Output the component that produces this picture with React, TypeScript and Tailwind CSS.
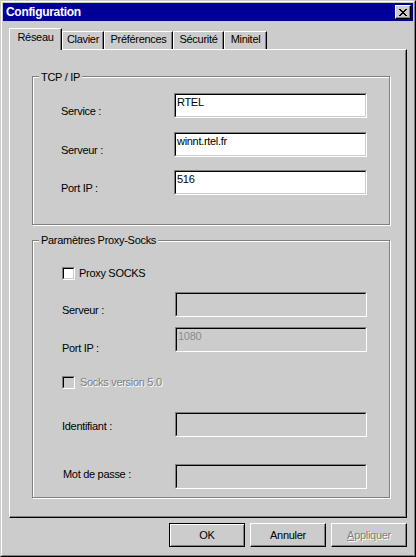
import React from 'react'

interface Tab {
  label: string
  width: string
  active?: boolean
}

const tabs: Tab[] = [
  { label: 'Réseau', width: 'w-[53px]', active: true },
  { label: 'Clavier', width: 'w-[42px]' },
  { label: 'Préférences', width: 'w-[69px]' },
  { label: 'Sécurité', width: 'w-[51px]' },
  { label: 'Minitel', width: 'w-[43px]' },
]

// sunken edit box, classic 3D look
function Field({
  value,
  disabled,
  width,
}: {
  value?: string
  disabled?: boolean
  width: string
}) {
  return (
    <div
      className={`h-[25px] ${width} border border-t-[#808080] border-l-[#808080] border-r-white border-b-white`}>
      <div
        className={`h-full border border-t-black border-l-black border-r-[#cccccc] border-b-[#cccccc] pl-[1px] pt-[1px] whitespace-nowrap ${
          disabled ? 'bg-[#cccccc] text-[#8c8c8c]' : 'bg-white text-black'
        }`}>
        {value}
      </div>
    </div>
  )
}

function CheckBox({ label, disabled }: { label: string; disabled?: boolean }) {
  return (
    <div
      className={`flex items-center h-[13px] ${
        disabled ? 'gap-[5px]' : 'gap-[4px]'
      }`}>
      <div className="w-[13px] h-[13px] border border-t-[#808080] border-l-[#808080] border-r-white border-b-white">
        <div
          className={`h-full border border-t-black border-l-black border-r-[#cccccc] border-b-[#cccccc] ${
            disabled ? 'bg-[#cccccc]' : 'bg-white'
          }`}
        />
      </div>
      <span
        className={
          disabled ? 'text-[#808080] [text-shadow:1px_1px_0_#ffffff]' : ''
        }>
        {label}
      </span>
    </div>
  )
}

function Row({
  label,
  labelTop,
  children,
}: {
  label: string
  labelTop: string
  children: React.ReactNode
}) {
  return (
    <div className="flex items-start">
      <span className={`w-[113px] whitespace-nowrap ${labelTop}`}>{label}</span>
      {children}
    </div>
  )
}

function Group({
  title,
  titleTop,
  className,
  children,
}: {
  title: string
  titleTop: string
  className: string
  children: React.ReactNode
}) {
  return (
    <div
      className={`relative ml-[22px] w-[358px] border border-[#808080] shadow-[inset_1px_1px_0_#ffffff,1px_1px_0_#ffffff] flex flex-col ${className}`}>
      <span
        className={`absolute left-[6px] ${titleTop} bg-[#cccccc] px-[2px] whitespace-nowrap`}>
        {title}
      </span>
      {children}
    </div>
  )
}

function Button({
  children,
  isDefault,
  disabled,
}: {
  children: React.ReactNode
  isDefault?: boolean
  disabled?: boolean
}) {
  return (
    <div
      className={`w-[76px] h-[24px] flex items-center justify-center ${
        isDefault
          ? 'border border-black shadow-[inset_1px_1px_0_#ffffff,inset_-1px_-1px_0_#808080]'
          : 'border border-t-white border-l-white border-r-black border-b-black shadow-[inset_-1px_-1px_0_#808080]'
      } ${disabled ? 'text-[#808080] [text-shadow:1px_1px_0_#ffffff]' : ''}`}>
      {children}
    </div>
  )
}

function CloseGlyph() {
  const rows = [
    'XX....XX',
    '.XX..XX.',
    '..XXXX..',
    '...XX...',
    '..XXXX..',
    '.XX..XX.',
    'XX....XX',
  ]
  return (
    <svg width="8" height="7" viewBox="0 0 8 7" shapeRendering="crispEdges">
      {rows.map((r, y) =>
        r.split('').map((c, x) =>
          c === 'X' ? (
            <rect key={`${x}-${y}`} x={x} y={y} width="1" height="1" fill="#000" />
          ) : null,
        ),
      )}
    </svg>
  )
}

export default function App() {
  return (
    <div className="w-[416px] h-[557px] bg-[#cccccc] text-black font-['Liberation_Sans',Arial,sans-serif] text-[11px] leading-[13px] tracking-[-0.3px] border border-t-[#cccccc] border-l-[#cccccc] border-r-black border-b-black">
      <div className="h-full border border-t-white border-l-white border-r-[#808080] border-b-[#808080] p-[1px] flex flex-col">
        {/* title bar */}
        <div className="h-[18px] bg-[#000099] flex items-center justify-between pl-[3px] pr-[2px]">
          <span className="text-white font-bold text-[12px] tracking-[-0.3px]">Configuration</span>
          <div className="w-[16px] h-[14px] bg-[#cccccc] border border-t-white border-l-white border-r-black border-b-black shadow-[inset_-1px_-1px_0_#808080] flex items-center justify-center pr-[1px]">
            <CloseGlyph />
          </div>
        </div>

        <div className="px-[6px] pt-[7px] flex flex-col">
          {/* tabs */}
          <div className="flex items-end h-[21px] relative z-10">
            {tabs.map((t) => (
              <div
                key={t.label}
                className={`${t.width} text-center whitespace-nowrap border-t border-l border-white border-r border-r-black shadow-[inset_-1px_0_0_#808080] ${
                  t.active
                    ? 'h-[22px] -mb-[1px] bg-[#cccccc] pt-[2px]'
                    : 'h-[18px] pt-[1px]'
                }`}>
                {t.label}
              </div>
            ))}
          </div>

          {/* tab panel */}
          <div className="h-[469px] border border-t-white border-l-white border-r-black border-b-black shadow-[inset_-1px_-1px_0_#808080] flex flex-col">
            <Group title="TCP / IP" titleTop="top-[-6px]" className="mt-[26px] h-[149px] pt-[16px] pl-[28px]">
              <Row label="Service :" labelTop="mt-[12px]">
                <Field width="w-[193px]" value="RTEL" />
              </Row>
              <div className="mt-[14px]">
                <Row label="Serveur :" labelTop="mt-[12px]">
                  <Field width="w-[193px]" value="winnt.rtel.fr" />
                </Row>
              </div>
              <div className="mt-[13px]">
                <Row label="Port IP :" labelTop="mt-[12px]">
                  <Field width="w-[193px]" value="516" />
                </Row>
              </div>
            </Group>

            <Group
              title="Paramètres Proxy-Socks"
              titleTop="top-[-7px]"
              className="mt-[15px] h-[258px] pt-[26px] pl-[29px]">
              <CheckBox label="Proxy SOCKS" />
              <div className="mt-[12px]">
                <Row label="Serveur :" labelTop="mt-[12px]">
                  <Field width="w-[192px]" disabled />
                </Row>
              </div>
              <div className="mt-[10px]">
                <Row label="Port IP :" labelTop="mt-[15px]">
                  <Field width="w-[192px]" value="1080" disabled />
                </Row>
              </div>
              <div className="mt-[21px]">
                <CheckBox label="Socks version 5.0" disabled />
              </div>
              <div className="mt-[23px]">
                <Row label="Identifiant :" labelTop="mt-[8px]">
                  <Field width="w-[192px]" disabled />
                </Row>
              </div>
              <div className="mt-[27px]">
                <Row label="Mot de passe :" labelTop="mt-[4px] pl-[1px]">
                  <Field width="w-[192px]" disabled />
                </Row>
              </div>
            </Group>
          </div>

          {/* buttons */}
          <div className="mt-[5px] flex justify-end gap-[5px]">
            <Button isDefault>OK</Button>
            <Button>Annuler</Button>
            <Button disabled>
              <span>
                <span className="underline">A</span>ppliquer
              </span>
            </Button>
          </div>
        </div>
      </div>
    </div>
  )
}
